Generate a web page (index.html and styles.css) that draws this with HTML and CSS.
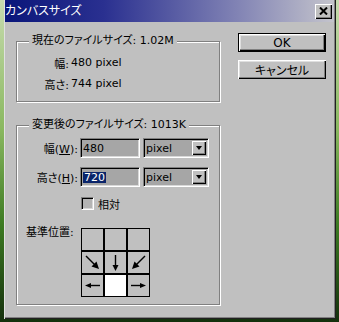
FILE: index.html
```html
<!DOCTYPE html>
<html>

<head>
    <title>カンバスサイズ</title>
    <meta charset="utf-8">
    <link rel="stylesheet" href="styles.css">
</head>

<body>
    <div class="dialog">
        <div class="titlebar">
            <span class="title">カンバスサイズ</span>
            <span class="close">
                <svg width="9" height="8" viewBox="0 0 9 8">
                    <path d="M1 0.5 L8 7.5 M8 0.5 L1 7.5" stroke="#000" stroke-width="2" />
                </svg>
            </span>
        </div>

        <div class="content">
            <div class="left">
                <div class="group group-current">
                    <span class="legend">現在のファイルサイズ: 1.02M</span>
                    <div class="info-row first">
                        <span class="info-label">幅:</span>
                        <span>480 pixel</span>
                    </div>
                    <div class="info-row">
                        <span class="info-label">高さ:</span>
                        <span>744 pixel</span>
                    </div>
                </div>

                <div class="group group-new">
                    <span class="legend">変更後のファイルサイズ: 1013K</span>
                    <div class="field-row first">
                        <label class="field-label">幅(<u>W</u>):</label>
                        <div class="edit">480</div>
                        <div class="combo">
                            <span class="combo-text">pixel</span>
                            <span class="drop"></span>
                        </div>
                    </div>
                    <div class="field-row">
                        <label class="field-label">高さ(<u>H</u>):</label>
                        <div class="edit"><span class="selected">720</span></div>
                        <div class="combo">
                            <span class="combo-text">pixel</span>
                            <span class="drop"></span>
                        </div>
                    </div>
                    <div class="check-row">
                        <span class="checkbox"></span>
                        <span>相対</span>
                    </div>
                    <div class="anchor-row">
                        <span class="anchor-label">基準位置:</span>
                        <div class="anchor-grid">
                            <div class="cell"></div>
                            <div class="cell"></div>
                            <div class="cell"></div>
                            <div class="cell">
                                <svg viewBox="0 0 21 21">
                                    <path d="M4 4 L13 13" stroke="#000" stroke-width="1.4" />
                                    <polygon points="17,17 9.5,14.5 14.5,9.5" fill="#000" />
                                </svg>
                            </div>
                            <div class="cell">
                                <svg viewBox="0 0 21 21">
                                    <path d="M10.5 3 L10.5 14" stroke="#000" stroke-width="1.4" />
                                    <polygon points="7.5,13 13.5,13 10.5,19" fill="#000" />
                                </svg>
                            </div>
                            <div class="cell">
                                <svg viewBox="0 0 21 21">
                                    <path d="M17 4 L8 13" stroke="#000" stroke-width="1.4" />
                                    <polygon points="4,17 6.5,9.5 11.5,14.5" fill="#000" />
                                </svg>
                            </div>
                            <div class="cell">
                                <svg viewBox="0 0 21 21">
                                    <path d="M18 10.5 L8 10.5" stroke="#000" stroke-width="1.4" />
                                    <polygon points="3,10.5 9,8 9,13" fill="#000" />
                                </svg>
                            </div>
                            <div class="cell anchor"></div>
                            <div class="cell">
                                <svg viewBox="0 0 21 21">
                                    <path d="M3 10.5 L13 10.5" stroke="#000" stroke-width="1.4" />
                                    <polygon points="18,10.5 12,8 12,13" fill="#000" />
                                </svg>
                            </div>
                        </div>
                    </div>
                </div>
            </div>

            <div class="buttons">
                <button class="btn default">OK</button>
                <button class="btn">キャンセル</button>
            </div>
        </div>
    </div>
</body>

</html>
```

FILE: styles.css
```css
* {
    box-sizing: border-box;
}

html,
body {
    margin: 0;
    height: 322px;
    overflow: hidden;
}

body {
    background: linear-gradient(to bottom, #c8dcb0 0%, #8ab860 40%, #3c7a22 70%, #14300c 100%);
    font-family: "DejaVu Sans", "Noto Sans CJK JP", sans-serif;
    font-size: 11px;
    font-feature-settings: "palt";
    color: #000;
}

.dialog {
    margin-left: 4px;
    width: 332px;
    height: 319px;
    background: #c0c0c0;
    box-shadow: inset 1px 0 0 #e0e0e0, inset -1px -1px 0 #202020, inset -2px -2px 0 #808080;
    display: flex;
    flex-direction: column;
}

.titlebar {
    height: 22px;
    margin: 0 2px 0 1px;
    padding: 0 2px 0 0;
    display: flex;
    align-items: center;
    justify-content: space-between;
    background: linear-gradient(to right, #0a167a 0%, #2a3090 30%, #8082b4 70%, #c4c4cc 100%);
}

.title {
    color: #fff;
    font-size: 12px;
    line-height: 14px;
}

.close {
    width: 17px;
    height: 15px;
    background: #c0c0c0;
    display: flex;
    align-items: center;
    justify-content: center;
    box-shadow: inset 1px 1px 0 #fff, inset -1px -1px 0 #000, inset -2px -2px 0 #808080;
}

.content {
    display: flex;
    padding: 11px 0 0 12px;
}

.left {
    width: 205px;
    padding-top: 8px;
}

.group {
    width: 204px;
    border: 1px solid #808080;
    box-shadow: 1px 1px 0 #fff, inset 1px 1px 0 #fff;
}

.group-current {
    height: 61px;
}

.group-new {
    margin-top: 23px;
    height: 180px;
}

.legend {
    display: block;
    width: fit-content;
    height: 14px;
    line-height: 14px;
    margin: -8px 0 0 12px;
    padding: 0 3px;
    background: #c0c0c0;
}

.info-row {
    display: flex;
    align-items: center;
    height: 21px;
}

.info-row.first {
    margin-top: 4px;
}

.info-label {
    width: 52px;
    margin-right: 2px;
    text-align: right;
}

.field-row {
    display: flex;
    align-items: center;
    height: 20px;
    margin-top: 9px;
}

.field-row.first {
    margin-top: 6px;
}

.field-label {
    width: 61px;
    margin-right: 2px;
    text-align: right;
}

.edit,
.combo {
    height: 20px;
    background: #a6a6a6;
    border: 1px solid;
    border-color: #808080 #fff #fff #808080;
    box-shadow: inset 1px 1px 0 #000, inset -1px -1px 0 #d8d8d8;
    display: flex;
    align-items: center;
    padding-left: 2px;
}

.edit {
    width: 60px;
}

.selected {
    background: #0a246a;
    color: #fff;
    padding: 0 1px;
    line-height: 11px;
}

.combo {
    width: 66px;
    margin-left: 3px;
    padding-right: 2px;
    justify-content: space-between;
}

.drop {
    width: 14px;
    height: 14px;
    background: #c0c0c0;
    box-shadow: inset 1px 1px 0 #fff, inset -1px -1px 0 #000, inset -2px -2px 0 #808080;
    display: flex;
    align-items: center;
    justify-content: center;
}

.drop::after {
    content: "";
    border-left: 3.5px solid transparent;
    border-right: 3.5px solid transparent;
    border-top: 4px solid #000;
}

.check-row {
    display: flex;
    align-items: center;
    gap: 4px;
    margin-top: 10px;
    padding-left: 64px;
    height: 13px;
}

.checkbox {
    width: 13px;
    height: 13px;
    background: #b4b4b4;
    border: 1px solid;
    border-color: #808080 #fff #fff #808080;
    box-shadow: inset 1px 1px 0 #000, inset -1px -1px 0 #d8d8d8;
}

.anchor-row {
    display: flex;
    align-items: flex-start;
    margin-top: 18px;
    padding-left: 9px;
}

.anchor-label {
    width: 55px;
    margin-top: -2px;
    line-height: 14px;
}

.anchor-grid {
    width: 69px;
    height: 69px;
    padding: 1px;
    background: #000;
    display: grid;
    grid-template-columns: repeat(3, 21px);
    grid-template-rows: repeat(3, 21px);
    gap: 2px;
}

.cell {
    background: #c0c0c0;
}

.cell svg {
    display: block;
    width: 21px;
    height: 21px;
}

.cell.anchor {
    background: #fff;
}

.buttons {
    margin-left: 17px;
    width: 88px;
    display: flex;
    flex-direction: column;
    gap: 8px;
}

.btn {
    height: 19px;
    padding: 0;
    border: none;
    background: #c0c0c0;
    font: inherit;
    font-size: 12px;
    color: #000;
    box-shadow: inset 1px 1px 0 #fff, inset -1px -1px 0 #000, inset -2px -2px 0 #808080, inset 2px 2px 0 #dfdfdf;
}

.btn.default {
    border: 1px solid #000;
}
```
